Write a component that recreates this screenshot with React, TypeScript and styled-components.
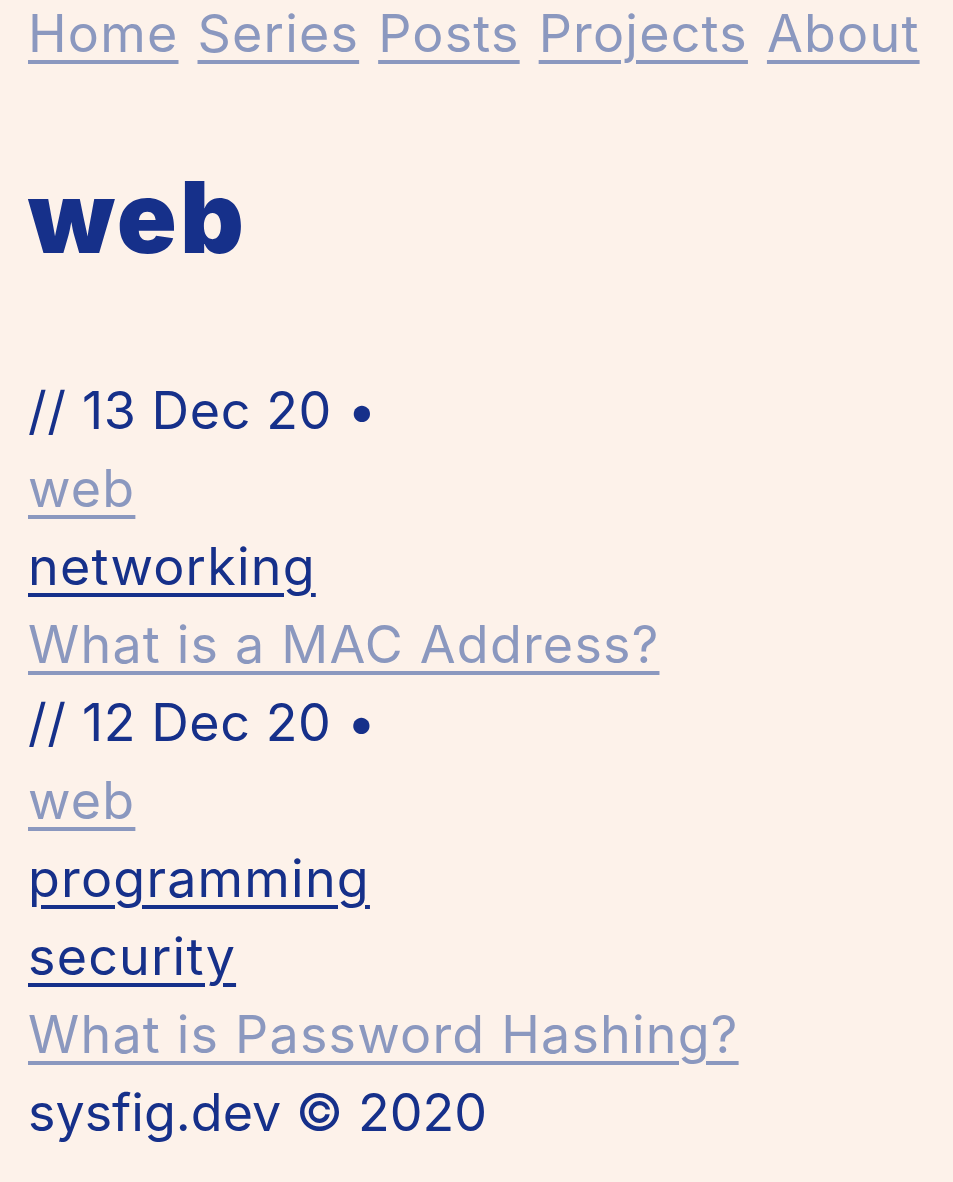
import React from "react";
import styled, { createGlobalStyle } from "styled-components";

const Global = createGlobalStyle`
  html, body { margin: 0; padding: 0; background: #fdf2ea; }
  body {
    font-family: Inter, "Noto Sans", sans-serif;
    font-size: 52px;
    line-height: 78px;
    letter-spacing: 1.2px;
    color: #16308a;
  }
`;

const Page = styled.div`
  padding: 0 28px;
  min-height: 1182px;
  box-sizing: border-box;
`;

const Nav = styled.nav`
  display: flex;
  flex-wrap: wrap;
  column-gap: 19px;
  margin-top: -5px;
`;

const Link = styled.a<{ $dark?: boolean }>`
  color: ${(p) => (p.$dark ? "#16308a" : "#8b98bf")};
  text-decoration: underline;
  text-decoration-thickness: 4px;
  text-underline-offset: 8px;
`;

const Title = styled.h1`
  margin: 84px 0 95px;
  font-size: 99px;
  line-height: 120px;
  font-weight: 900;
  letter-spacing: 3px;
  color: #16308a;
`;

const List = styled.div`
  display: flex;
  flex-direction: column;
`;

const Line = styled.div``;

const DateLine = styled.div`
  letter-spacing: 0.6px;
`;

const Footer = styled.footer`
  color: #16308a;
  letter-spacing: 0;
`;

const posts = [
  { date: "13 Dec 20", tags: ["networking"], title: "What is a MAC Address?" },
  { date: "12 Dec 20", tags: ["programming", "security"], title: "What is Password Hashing?" },
];

export default function App() {
  return (
    <Page>
      <Global />
      <Nav>
        <Link href="#">Home</Link>
        <Link href="#">Series</Link>
        <Link href="#">Posts</Link>
        <Link href="#">Projects</Link>
        <Link href="#">About</Link>
      </Nav>
      <Title>web</Title>
      <List>
        {posts.map((p) => (
          <React.Fragment key={p.title}>
            <DateLine>// {p.date} •</DateLine>
            <Line><Link href="#">web</Link></Line>
            {p.tags.map((t) => (
              <Line key={t}><Link href="#" $dark>{t}</Link></Line>
            ))}
            <Line><Link href="#">{p.title}</Link></Line>
          </React.Fragment>
        ))}
        <Footer>sysfig.dev © 2020</Footer>
      </List>
    </Page>
  );
}
